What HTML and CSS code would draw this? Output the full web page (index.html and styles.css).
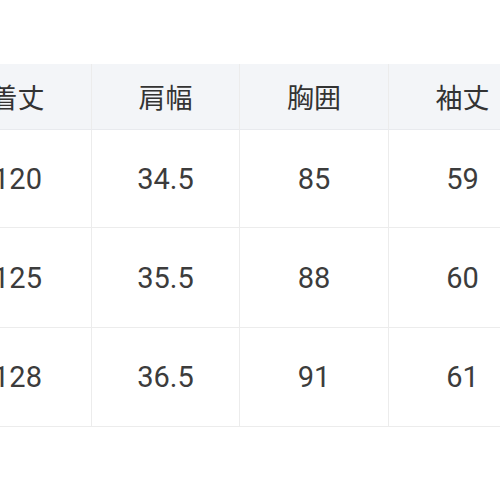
FILE: index.html
```html
<!DOCTYPE html>
<html lang="ja">
<head>
<meta charset="utf-8">
<link rel="stylesheet" href="styles.css">
</head>
<body>
<div class="viewport">
  <div class="table">
    <div class="cell head">着丈</div>
    <div class="cell head">肩幅</div>
    <div class="cell head">胸囲</div>
    <div class="cell head">袖丈</div>

    <div class="cell">120</div>
    <div class="cell">34.5</div>
    <div class="cell">85</div>
    <div class="cell">59</div>

    <div class="cell">125</div>
    <div class="cell">35.5</div>
    <div class="cell">88</div>
    <div class="cell">60</div>

    <div class="cell">128</div>
    <div class="cell">36.5</div>
    <div class="cell">91</div>
    <div class="cell">61</div>
  </div>
</div>
</body>
</html>
```

FILE: styles.css
```css
html, body {
  margin: 0;
  padding: 0;
  background: #ffffff;
}
.viewport {
  width: 500px;
  height: 500px;
  overflow: hidden;
  padding-top: 64px;
  box-sizing: border-box;
}
.table {
  margin-left: -56px;
  display: grid;
  grid-template-columns: 148px 148px 149px 148px;
  grid-template-rows: 66px 98px 100px 99px;
  font-family: Roboto, "Noto Sans CJK JP", sans-serif;
  color: #3c3c3c;
}
.cell {
  display: flex;
  align-items: center;
  justify-content: center;
  border-right: 1px solid #ececec;
  border-bottom: 1px solid #ececec;
  font-size: 29px;
  box-sizing: border-box;
}
.head {
  background: #f3f5f8;
  font-family: "Noto Sans CJK JP", sans-serif;
  font-size: 27px;
  color: #333333;
  border-bottom-color: #e8eaee;
}
```
